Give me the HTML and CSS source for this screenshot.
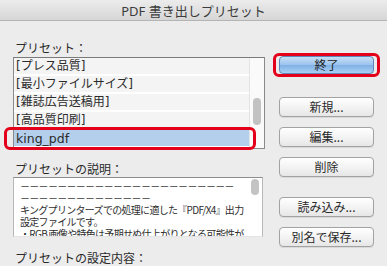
FILE: index.html
```html
<!DOCTYPE html>
<html lang="ja">
<head>
<meta charset="utf-8">
<title>PDF 書き出しプリセット</title>
<link rel="stylesheet" href="styles.css">
</head>
<body>
<div class="titlebar">PDF 書き出しプリセット</div>
<div class="main">
  <div class="left">
    <div class="label">プリセット：</div>
    <div class="list">
      <div class="rows">
        <div class="row">[プレス品質]</div>
        <div class="row">[最小ファイルサイズ]</div>
        <div class="row">[雑誌広告送稿用]</div>
        <div class="row">[高品質印刷]</div>
        <div class="row selected">king_pdf</div>
      </div>
      <div class="scroll"><div class="thumb"></div></div>
    </div>
    <div class="label label-desc">プリセットの説明：</div>
    <div class="desc">
      <div class="desc-text">
        <div class="line">－－－－－－－－－－－－－－－－－－－－－－－</div>
        <div class="line">－－－－－－－－－－－－－－</div>
        <div class="line">キングプリンターズでの処理に適した『PDF/X4』出力</div>
        <div class="line">設定ファイルです。</div>
        <div class="line">・RGB 画像や特色は予期せぬ仕上がりとなる可能性が</div>
      </div>
      <div class="desc-scroll"><div class="desc-thumb"></div></div>
    </div>
    <div class="label label-settings">プリセットの設定内容：</div>
  </div>
  <div class="right">
    <div class="btn primary">終了</div>
    <div class="btn b-new">新規...</div>
    <div class="btn b-gap10">編集...</div>
    <div class="btn b-gap10">削除</div>
    <div class="btn b-gap20">読み込み...</div>
    <div class="btn b-gap10">別名で保存...</div>
  </div>
</div>
<div class="hl hl-list"></div>
<div class="hl hl-btn"></div>
</body>
</html>
```
FILE: styles.css
```css
html, body {
  margin: 0;
  padding: 0;
}
body {
  width: 387px;
  height: 266px;
  overflow: hidden;
  background: #ececec;
  font-family: "DejaVu Sans", "Noto Sans CJK JP", sans-serif;
  color: #262626;
  position: relative;
}
.titlebar {
  height: 20px;
  line-height: 22px;
  text-align: center;
  font-size: 13px;
  color: #3c3c3c;
  background: linear-gradient(#ececec, #d6d6d6);
  border-bottom: 1px solid #b4b4b4;
  font-family: "Noto Sans", "Noto Sans CJK JP", sans-serif;
}
.main {
  display: flex;
  padding-left: 13px;
  gap: 14px;
}
.left {
  width: 252px;
}
.label {
  font-family: "Noto Sans CJK JP", sans-serif;
  font-size: 12px;
  line-height: 16px;
  height: 16px;
  padding-left: 2px;
  color: #2a2a2a;
  margin-top: 19px;
  margin-bottom: 1px;
}
.label-desc {
  margin-top: 12px;
  margin-bottom: 0;
}
.label-settings {
  margin-top: 13px;
}
.list {
  display: flex;
  height: 90px;
  border: 1px solid #8a8a8a;
  border-top-color: #7a7a7a;
  background: #ffffff;
}
.rows {
  flex: 1;
}
.row {
  height: 16px;
  line-height: 17px;
  border-bottom: 2px solid #ffffff;
  background: #f4f4f4;
  font-size: 12px;
  padding-left: 2px;
  color: #2b2b2b;
  white-space: nowrap;
  font-family: "DejaVu Sans", "Noto Sans CJK JP", sans-serif;
}
.row.selected {
  background: #b4cfec;
  font-family: "DejaVu Sans", sans-serif;
  font-size: 12.5px;
}
.scroll {
  width: 14px;
  background: #fafafa;
  border-left: 1px solid #e4e4e4;
}
.thumb {
  width: 8px;
  height: 27px;
  margin: 40px 0 0 3px;
  border-radius: 4px;
  background: #c2c2c2;
}
.desc {
  display: flex;
  width: 248px;
  height: 58px;
  border: 1px solid #b8b8b8;
  border-top-color: #8e8e8e;
  border-bottom-color: #e4e4e4;
  background: #ffffff;
}
.desc-text {
  flex: 1;
  overflow: hidden;
  padding: 2px 0 0 6px;
  font-family: "Noto Sans CJK JP", sans-serif;
  font-size: 10px;
  line-height: 12px;
  letter-spacing: -0.7px;
  color: #2e2e2e;
}
.line {
  white-space: nowrap;
  height: 12px;
}
.desc-scroll {
  width: 12px;
}
.desc-thumb {
  width: 8px;
  height: 16px;
  margin: 1px 0 0 1px;
  border-radius: 4px;
  background: #c4c4c4;
}
.right {
  width: 95px;
  display: flex;
  flex-direction: column;
  padding-top: 35px;
}
.btn {
  box-sizing: border-box;
  height: 20px;
  line-height: 18px;
  text-align: center;
  font-family: "Noto Sans CJK JP", sans-serif;
  font-size: 12px;
  color: #2a2a2a;
  border: 1px solid #a2a2a2;
  border-radius: 4px;
  background: linear-gradient(#ffffff, #f1f1f1 60%, #e6e6e6);
  box-shadow: 0 1px 0 rgba(0,0,0,0.08);
}
.btn.primary {
  height: 18px;
  line-height: 16px;
  border-color: #5f86b8;
  background: linear-gradient(#c7def6, #9ac3ee 50%, #7fb1e6 51%, #a9cff3);
  color: #1d1d1d;
}
.b-new {
  margin-top: 23px;
}
.b-gap10 {
  margin-top: 10px;
}
.b-gap20 {
  margin-top: 20px;
}
.hl {
  position: absolute;
  box-sizing: border-box;
  border: 3px solid #e4001a;
  border-radius: 6px;
}
.hl-list {
  left: 4px;
  top: 127px;
  width: 252px;
  height: 23px;
}
.hl-btn {
  left: 273px;
  top: 53px;
  width: 107px;
  height: 24px;
}
```
